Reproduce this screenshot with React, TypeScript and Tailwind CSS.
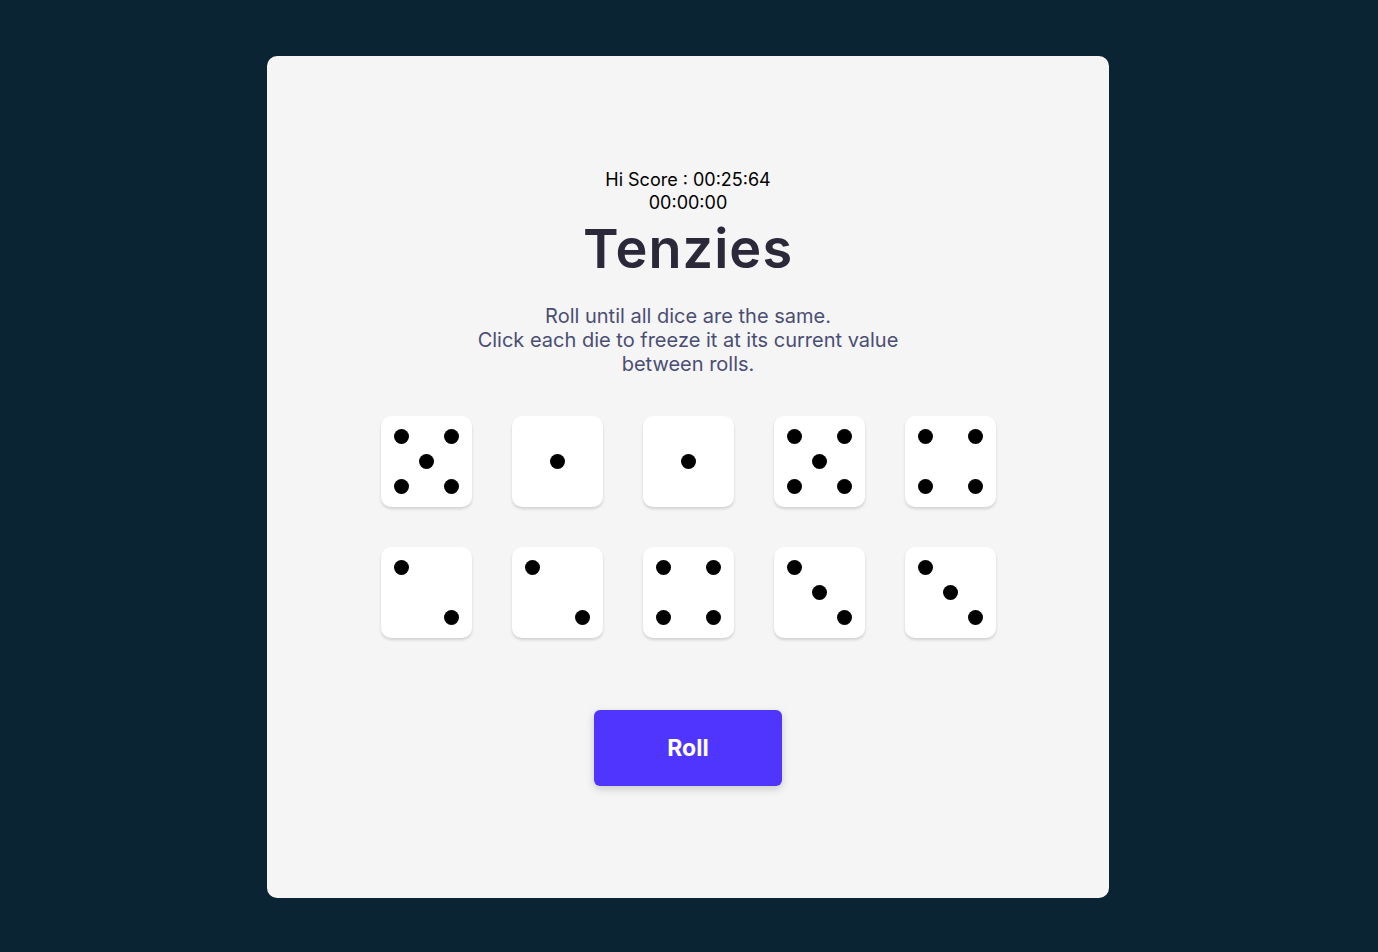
import React from "react";

const pos: Record<number, [number, number][]> = {
  1: [[45, 45]],
  2: [[20, 20], [70, 70]],
  3: [[20, 20], [45, 45], [70, 70]],
  4: [[20, 20], [70, 20], [20, 70], [70, 70]],
  5: [[20, 20], [70, 20], [45, 45], [20, 70], [70, 70]],
};

function Die({ value }: { value: number }) {
  return (
    <div className="relative w-[91px] h-[91px] bg-white rounded-[10px] shadow-[0_2px_3px_rgba(0,0,0,0.15)]">
      {pos[value].map(([x, y], i) => (
        <span
          key={i}
          className="absolute w-[15px] h-[15px] rounded-full bg-black"
          style={{ left: x - 7, top: y - 7 }}
        />
      ))}
    </div>
  );
}

export default function App() {
  const dice = [5, 1, 1, 5, 4, 2, 2, 4, 3, 3];
  return (
    <div
      className="min-h-[952px] w-full bg-[#0b2434] flex items-start justify-center pt-[56px] pr-[2px]"
      style={{ fontFamily: "Inter, 'Noto Sans', sans-serif" }}
    >
      <div className="w-[842px] h-[842px] bg-[#f5f5f5] rounded-[10px] flex flex-col items-center pt-[112px]">
        <div className="text-[18px] leading-[23px] text-black text-center">Hi Score : 00:25:64</div>
        <div className="text-[18px] leading-[23px] text-black text-center">00:00:00</div>
        <h1 className="text-[54px] leading-[68px] font-semibold text-[#2b283a] tracking-[0.02em] mt-[1px]">Tenzies</h1>
        <p className="text-[20px] leading-[24px] text-[#4a4e74] text-center mt-[21px] w-[440px]">
          Roll until all dice are the same.
          <br />
          Click each die to freeze it at its current value
          <br />
          between rolls.
        </p>
        <div className="grid grid-cols-5 gap-x-[40px] gap-y-[40px] mt-[40px]">
          {dice.map((d, i) => (
            <Die key={i} value={d} />
          ))}
        </div>
        <button className="mt-[72px] w-[188px] h-[76px] bg-[#5035ff] rounded-[6px] text-white text-[23px] font-bold shadow-[0_3px_8px_rgba(0,0,0,0.18)]">
          Roll
        </button>
      </div>
    </div>
  );
}
